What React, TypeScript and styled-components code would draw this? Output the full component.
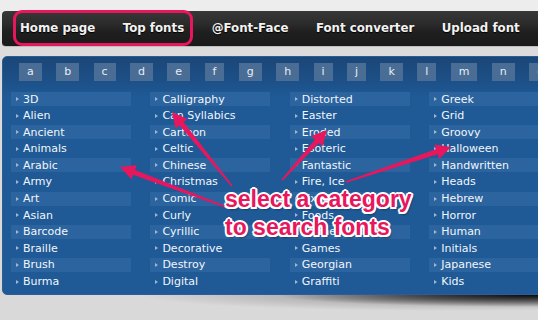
import styled, { createGlobalStyle } from 'styled-components'

const GlobalStyle = createGlobalStyle`
  body {
    margin: 0;
    background: #d8d8d8;
    overflow: hidden;
  }
`

const navLinks = ['Home page', 'Top fonts', '@Font-Face', 'Font converter', 'Upload font']

const letters = 'abcdefghijklmno'.split('')

const columns = [
  ['3D', 'Alien', 'Ancient', 'Animals', 'Arabic', 'Army', 'Art', 'Asian', 'Barcode', 'Braille', 'Brush', 'Burma'],
  ['Calligraphy', 'Can Syllabics', 'Cartoon', 'Celtic', 'Chinese', 'Christmas', 'Comic', 'Curly', 'Cyrillic', 'Decorative', 'Destroy', 'Digital'],
  ['Distorted', 'Easter', 'Eroded', 'Esoteric', 'Fantastic', 'Fire, Ice', 'Fixed', 'Foods', 'Frames', 'Games', 'Georgian', 'Graffiti'],
  ['Greek', 'Grid', 'Groovy', 'Halloween', 'Handwritten', 'Heads', 'Hebrew', 'Horror', 'Human', 'Initials', 'Japanese', 'Kids'],
]

// tail -> tip, tapered shaft with a triangle head
const arrows = [
  { x1: 232, y1: 186, x2: 172, y2: 112 },
  { x1: 226, y1: 207, x2: 120, y2: 167 },
  { x1: 282, y1: 180, x2: 327, y2: 130 },
  { x1: 346, y1: 182, x2: 451, y2: 147 },
]

function arrowPoints(a: { x1: number; y1: number; x2: number; y2: number }) {
  const dx = a.x2 - a.x1
  const dy = a.y2 - a.y1
  const len = Math.sqrt(dx * dx + dy * dy)
  const ux = dx / len
  const uy = dy / len
  const nx = -uy
  const ny = ux
  const headLen = 15
  const headW = 7.5
  const bx = a.x2 - ux * headLen
  const by = a.y2 - uy * headLen
  const p = (x: number, y: number) => `${x.toFixed(1)},${y.toFixed(1)}`
  return [
    p(a.x1 + nx * 0.8, a.y1 + ny * 0.8),
    p(bx + nx * 2.6, by + ny * 2.6),
    p(bx + nx * headW, by + ny * headW),
    p(a.x2, a.y2),
    p(bx - nx * headW, by - ny * headW),
    p(bx - nx * 2.6, by - ny * 2.6),
    p(a.x1 - nx * 0.8, a.y1 - ny * 0.8),
  ].join(' ')
}

export default function App() {
  return (
    <>
      <GlobalStyle />
      <Page>
        <TopStrip />
        <NavBar>
          {navLinks.map((link) => (
            <NavLink key={link}>{link}</NavLink>
          ))}
        </NavBar>
        <Panel>
          <LetterRow>
            {letters.map((l) => (
              <LetterBox key={l}>{l}</LetterBox>
            ))}
          </LetterRow>
          <CategoryGrid>
            {columns.map((col, ci) => (
              <Column key={ci}>
                {col.map((name, i) => (
                  <Item key={name} $band={i % 2 === 0}>
                    <Bullet />
                    {name}
                  </Item>
                ))}
              </Column>
            ))}
          </CategoryGrid>
        </Panel>
        <PanelShadow />

        <Highlight />
        <ArrowLayer width="538" height="320">
          {arrows.map((a, i) => (
            <polygon key={i} points={arrowPoints(a)} fill="#e8175d" />
          ))}
        </ArrowLayer>
        <Callout>
          select a category
          <br />
          to search fonts
        </Callout>
      </Page>
    </>
  )
}

const Page = styled.div`
  position: relative;
  width: 538px;
  height: 320px;
  overflow: hidden;
  background: linear-gradient(#ededed 0, #ededed 10px, #dcdcdc 48px, #d9d9d9 100%);
  font-family: 'DejaVu Sans', Verdana, sans-serif;
`

const TopStrip = styled.div`
  height: 11px;
`

const NavBar = styled.div`
  display: flex;
  align-items: center;
  gap: 27.5px;
  width: 560px;
  height: 36px;
  margin-left: 2px;
  padding-left: 18px;
  box-sizing: border-box;
  border-radius: 4px 0 0 4px;
  background: linear-gradient(#383838 0, #2a2a2a 40%, #1f1f1f 60%, #1a1a1a 100%);
  border-bottom: 1px solid #bdbdbd;
`

const NavLink = styled.span`
  color: #f2f2f2;
  font-size: 11.8px;
  font-weight: bold;
  white-space: nowrap;
  text-shadow: 0 1px 1px #000;
  padding-bottom: 1px;
`

const Panel = styled.div`
  width: 570px;
  margin: 9px 0 0 2px;
  padding: 6px 0 5px;
  box-sizing: border-box;
  border: 1px solid #2b5e93;
  border-radius: 5px 0 0 5px;
  background: linear-gradient(#1b4678 0, #1d5189 26px, #1f5a97 40px, #1f5a97 100%);
`

const LetterRow = styled.div`
  display: flex;
  gap: 14.4px;
  padding-left: 16px;
`

const LetterBox = styled.span`
  height: 18px;
  padding: 0 8px;
  line-height: 18px;
  font-size: 11px;
  color: #e6edf5;
  background: #4a6d96;
`

const CategoryGrid = styled.div`
  display: grid;
  grid-template-columns: repeat(4, 120px);
  column-gap: 19.4px;
  padding: 11px 0 0 8px;
`

const Column = styled.div`
  display: flex;
  flex-direction: column;
  gap: 2.6px;
`

const Item = styled.div<{ $band: boolean }>`
  display: flex;
  align-items: center;
  height: 14px;
  padding-left: 5px;
  font-size: 11px;
  color: #f2f6fa;
  white-space: nowrap;
  background: ${(p) => (p.$band ? '#2b649f' : 'transparent')};
`

const Bullet = styled.span`
  width: 0;
  height: 0;
  margin-right: 4px;
  border-left: 3px solid #9fb7d2;
  border-top: 2px solid transparent;
  border-bottom: 2px solid transparent;
`

const PanelShadow = styled.div`
  height: 18px;
  background:
    radial-gradient(ellipse 260px 12px at 100% 0, rgba(0, 0, 0, 0.95), rgba(0, 0, 0, 0.5) 50%, transparent 100%),
    radial-gradient(ellipse 320px 16px at 85% 0, rgba(0, 0, 0, 0.35), transparent 100%);
`

const Highlight = styled.div`
  position: absolute;
  left: 13px;
  top: 10px;
  width: 180px;
  height: 36px;
  box-sizing: border-box;
  border: 3px solid #e8175d;
  border-radius: 9px;
`

const ArrowLayer = styled.svg`
  position: absolute;
  left: 0;
  top: 0;
  pointer-events: none;
`

const Callout = styled.div`
  position: absolute;
  left: 225px;
  top: 185px;
  font-family: 'Liberation Sans', Arial, sans-serif;
  font-weight: bold;
  font-size: 23px;
  line-height: 28px;
  color: #e8175d;
  white-space: nowrap;
  text-shadow:
    2px 0 0 #fff, -2px 0 0 #fff, 0 2px 0 #fff, 0 -2px 0 #fff,
    1.5px 1.5px 0 #fff, -1.5px 1.5px 0 #fff, 1.5px -1.5px 0 #fff, -1.5px -1.5px 0 #fff,
    2px 3px 2px rgba(0, 0, 0, 0.35);
`
